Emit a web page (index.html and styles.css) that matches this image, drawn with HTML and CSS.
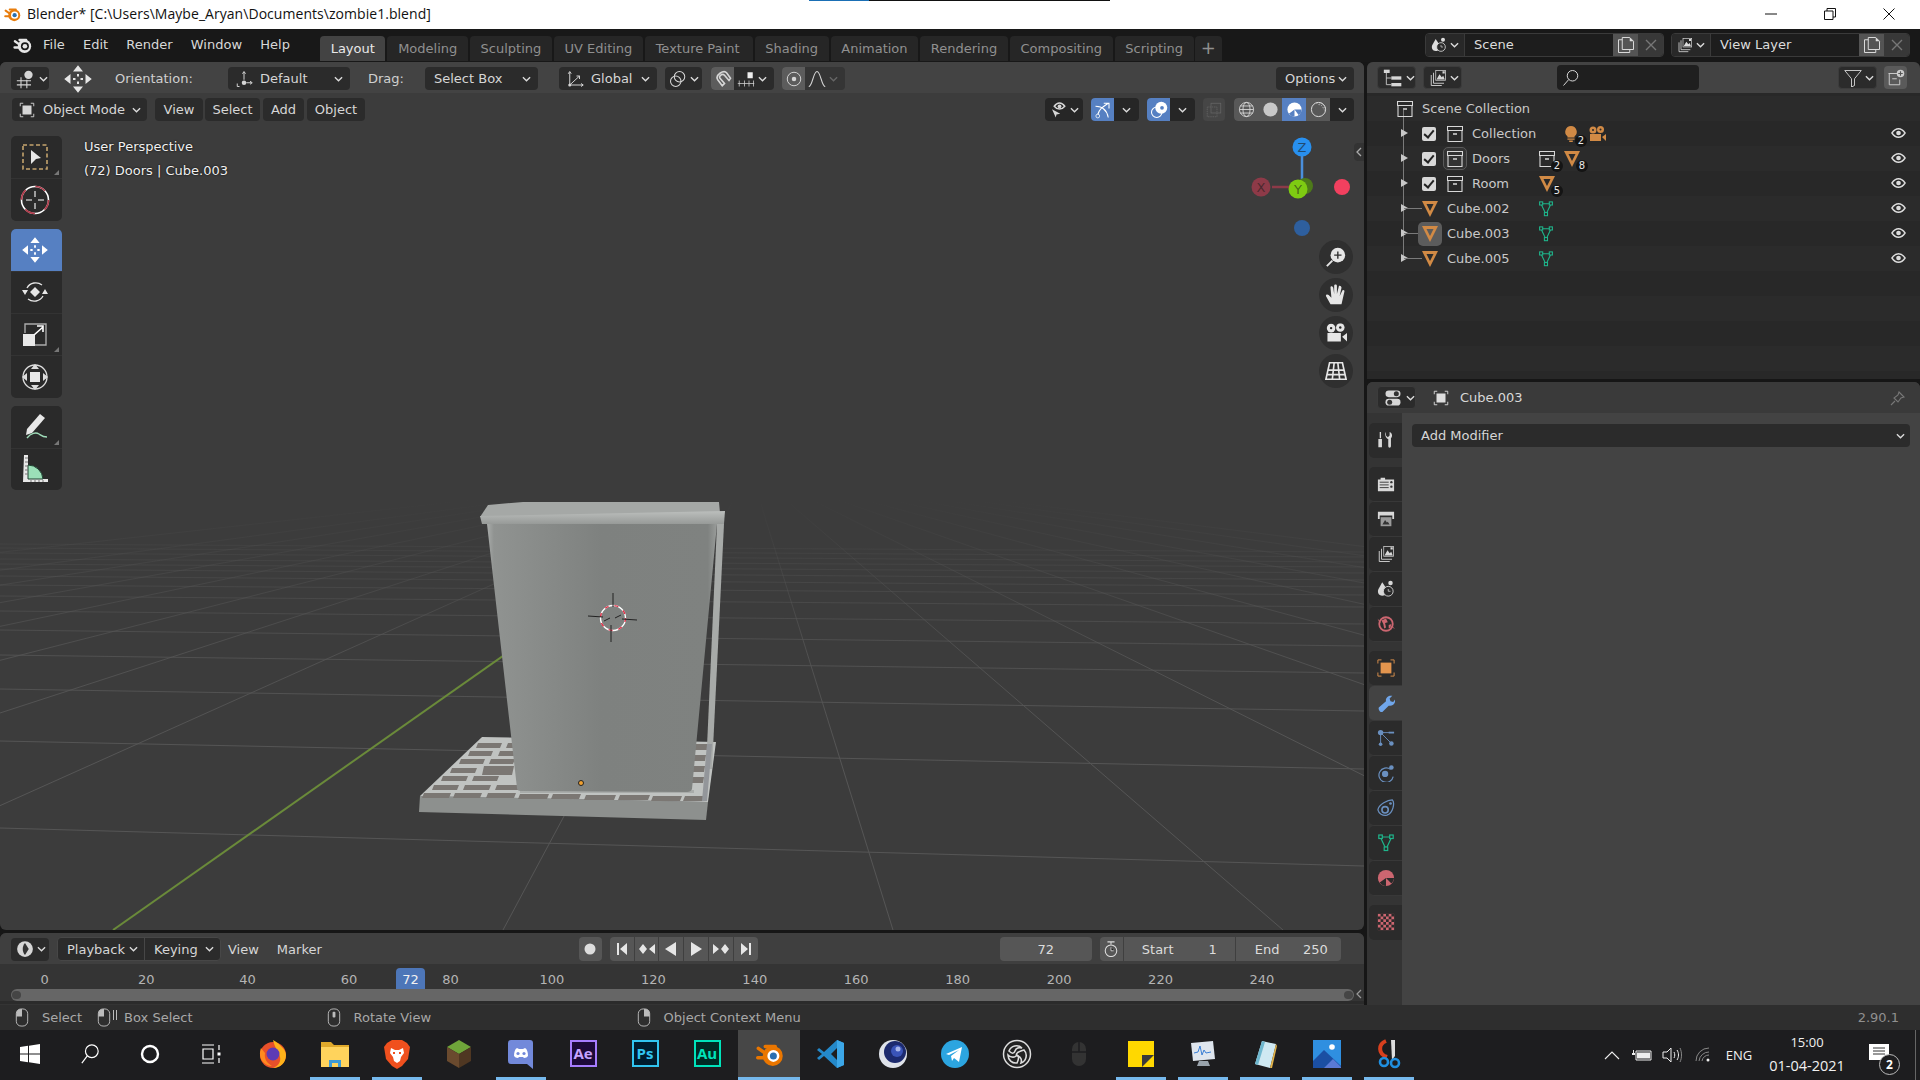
FILE: index.html
```html
<!DOCTYPE html>
<html lang="en">
<head>
<meta charset="utf-8">
<title>Blender</title>
<link rel="stylesheet" href="styles.css">
</head>
<body>
<svg class="sprite" aria-hidden="true"><defs>
<symbol id="chev" viewBox="0 0 10 6"><path d="M1 1l4 4 4-4" fill="none" stroke="currentColor" stroke-width="1.5"/></symbol>
<symbol id="blogo" viewBox="0 0 24 24"><path fill="none" stroke="currentColor" stroke-width="2.800" stroke-linecap="round" d="M3 15h9M3.500 7.500l9 6.500M9 6h8"/><circle cx="15" cy="13.500" r="8" fill="currentColor"/><circle cx="15.500" cy="13.500" r="4.800" fill="var(--eye,#181818)"/><circle cx="15.500" cy="13.500" r="2.800" fill="var(--pupil,#e6e6e6)"/></symbol>
<symbol id="v3d" viewBox="0 0 24 24"><path d="M1 14h17M1 19h17M6 10v13M13 13v10" fill="none" stroke="currentColor" stroke-width="1.300"/><circle cx="15" cy="7" r="5" fill="currentColor"/></symbol>
<symbol id="move" viewBox="0 0 24 24"><path fill="currentColor" d="M12 1l4 5H8zM12 23l-4-5h8zM1 12l5-4v8zM23 12l-5 4V8z"/><path stroke="currentColor" stroke-width="1.600" d="M12 8v2M12 14v2M8 12h2M14 12h2"/></symbol>
<symbol id="orient" viewBox="0 0 24 24"><path fill="none" stroke="currentColor" stroke-width="1.300" d="M12 3v10M10 5l2-3 2 3M15 17h7M20 15l3 2-3 2M3 18v4h3"/><circle cx="12" cy="17" r="3" fill="currentColor"/></symbol>
<symbol id="global" viewBox="0 0 24 24"><path fill="none" stroke="currentColor" stroke-width="1.300" d="M5 20V3M3 5l2-3 2 3M5 20h17M20 18l3 2-3 2M5 20L18 8M14 8h4v4"/><circle cx="5" cy="20" r="2" fill="currentColor"/></symbol>
<symbol id="pivot" viewBox="0 0 24 24"><circle cx="14" cy="9" r="7" fill="none" stroke="currentColor" stroke-width="1.400"/><circle cx="9" cy="15" r="7" fill="none" stroke="currentColor" stroke-width="1.400"/></symbol>
<symbol id="magnet" viewBox="0 0 24 24"><path fill="none" stroke="currentColor" stroke-width="2.200" d="M5 13l6 8 3-3-6-7c-2-3 3-7 6-4l6 7 2-3-5-7C13-1 1 7 5 13z"/></symbol>
<symbol id="incr" viewBox="0 0 24 24"><rect x="14" y="3" width="7" height="8" fill="#eee"/><path fill="none" stroke="currentColor" d="M1 18h22M3 14v8M10 14v8M16 14v8M22 14v8"/></symbol>
<symbol id="prop" viewBox="0 0 24 24"><circle cx="12" cy="12" r="9" fill="none" stroke="currentColor" stroke-width="1.300"/><circle cx="12" cy="12" r="3" fill="currentColor"/></symbol>
<symbol id="falloff" viewBox="0 0 24 24"><path fill="none" stroke="currentColor" stroke-width="1.400" d="M1 22c5 0 6-20 11-20s6 20 11 20"/></symbol>
<symbol id="objmode" viewBox="0 0 24 24"><rect x="6" y="6" width="12" height="12" fill="currentColor"/><path fill="none" stroke="currentColor" stroke-width="1.200" d="M3 7V3h4M17 3h4v4M21 17v4h-4M7 21H3v-4"/></symbol>
<symbol id="vis" viewBox="0 0 24 24"><path fill="currentColor" d="M4 11l5 11 1-4 5-1z"/><path fill="none" stroke="currentColor" stroke-width="2" d="M7 7c4-6 10-6 14 0-4 5-10 5-14 0z"/><circle cx="14" cy="7" r="2.500" fill="currentColor"/></symbol>
<symbol id="gizmoi" viewBox="0 0 24 24"><path fill="none" stroke="currentColor" stroke-width="1.400" d="M5 18C7 11 10 9 19 3M2 7c8 0 15 4 17 15M13 3h7v7"/><circle cx="5" cy="20" r="2.500" fill="none" stroke="currentColor"/></symbol>
<symbol id="over" viewBox="0 0 24 24"><circle cx="9" cy="15" r="7" fill="none" stroke="currentColor" stroke-width="1.400"/><circle cx="15" cy="9" r="8" fill="currentColor"/><circle cx="16" cy="9" r="2.500" fill="#5680c2"/></symbol>
<symbol id="xray" viewBox="0 0 24 24"><rect x="8" y="3" width="13" height="13" fill="none" stroke="currentColor"/><rect x="3" y="8" width="13" height="13" fill="none" stroke="currentColor" stroke-dasharray="2 1"/></symbol>
<symbol id="wire" viewBox="0 0 24 24"><g fill="none" stroke="currentColor" stroke-width="1.200"><circle cx="12" cy="12" r="10"/><ellipse cx="12" cy="12" rx="5" ry="10"/><path d="M2 12h20M3 7h18M3 17h18"/></g></symbol>
<symbol id="solid" viewBox="0 0 24 24"><circle cx="12" cy="12" r="10" fill="currentColor"/></symbol>
<symbol id="mat" viewBox="0 0 24 24"><circle cx="12" cy="12" r="10" fill="currentColor"/><path fill="#5680c2" d="M12 12h10a10 10 0 0 1-4 8zM12 12v10a10 10 0 0 1-8-4z"/></symbol>
<symbol id="rend" viewBox="0 0 24 24"><circle cx="12" cy="12" r="10" fill="none" stroke="currentColor" stroke-width="1.400"/><path fill="none" stroke="currentColor" stroke-dasharray="2 1.500" d="M12 5a7 7 0 0 1 7 7M9 3a9 9 0 0 1 12 11"/></symbol>
<symbol id="outl" viewBox="0 0 24 24"><rect x="1" y="2" width="7" height="4" fill="currentColor"/><path fill="none" stroke="currentColor" d="M4 6v14h6M4 12h6"/><rect x="10" y="10" width="12" height="4" fill="currentColor"/><rect x="10" y="18" width="12" height="4" fill="currentColor"/></symbol>
<symbol id="layers" viewBox="0 0 24 24"><path fill="none" stroke="currentColor" stroke-width="1.200" d="M3 8v14h14M6 5v14h14"/><rect x="9" y="2" width="13" height="13" fill="none" stroke="currentColor"/><path fill="currentColor" d="M10 14l4-7 3 4 2-2 2 5zM18 3h3v3h-3z"/></symbol>
<symbol id="search" viewBox="0 0 24 24"><circle cx="14" cy="9" r="7" fill="none" stroke="currentColor" stroke-width="1.300"/><path stroke="currentColor" stroke-width="1.300" d="M9 14l-7 8"/></symbol>
<symbol id="funnel" viewBox="0 0 24 24"><path fill="none" stroke="currentColor" stroke-width="1.200" d="M1 2h22l-9 11v9l-4 2V13z"/></symbol>
<symbol id="newcol" viewBox="0 0 24 24"><path fill="none" stroke="currentColor" stroke-width="1.300" d="M2 6h12M3 6v15h14v-7M7 13h6"/><circle cx="18" cy="6" r="5" fill="currentColor"/><path stroke="#555" stroke-width="1.500" d="M18 3v6M15 6h6"/></symbol>
<symbol id="scene" viewBox="0 0 24 24"><path fill="currentColor" d="M7 3l6 9c2 5-1 9-6 9s-7-5-5-9z"/><circle cx="18" cy="4" r="3" fill="currentColor"/><circle cx="15" cy="15" r="6.500" fill="#2a2a2a" stroke="currentColor" stroke-width="1.200"/><path stroke="currentColor" d="M15 15v-3M15 15h3"/></symbol>
<symbol id="copy" viewBox="0 0 24 24"><path fill="none" stroke="currentColor" stroke-width="1.300" d="M7 5H2v17h15v-4"/><path fill="none" stroke="currentColor" stroke-width="1.300" d="M7 2h10l5 5v11H7z"/><path fill="currentColor" d="M17 2l5 5h-5z"/></symbol>
<symbol id="cross" viewBox="0 0 12 12"><path stroke="currentColor" stroke-width="1.400" d="M1 1l10 10M11 1L1 11"/></symbol>
<symbol id="coll" viewBox="0 0 16 16"><path fill="none" stroke="currentColor" stroke-width="1.100" d="M.5.500h15v4H.5zM1 4.500v11h14v-11"/><path stroke="currentColor" stroke-width="1.400" d="M6 8h4"/></symbol>
<symbol id="meshobj" viewBox="0 0 16 16"><path fill-rule="evenodd" fill="currentColor" d="M0 0h16L8 16zM4.500 3l3.500 7 3.500-7z"/></symbol>
<symbol id="meshdata" viewBox="0 0 16 18"><g fill="none" stroke="currentColor" stroke-width="1.200"><rect x=".8" y="1" width="3.500" height="3.500"/><rect x="11.700" y="1" width="3.500" height="3.500"/><rect x="6.200" y="13" width="3.500" height="3.500"/><path d="M4 3h8M3 4.500l4 8.500M13 4.500l-4 8.500"/></g></symbol>
<symbol id="bulb" viewBox="0 0 16 18"><path fill="currentColor" d="M8 0a6.500 6.500 0 0 1 4 11.600V13H4v-1.400A6.500 6.500 0 0 1 8 0zM4 14h8v1.500H4zM6 16.400h4V18H6z"/></symbol>
<symbol id="cam" viewBox="0 0 18 16"><circle cx="5" cy="4" r="3.500" fill="currentColor"/><circle cx="12.500" cy="3.500" r="3.500" fill="currentColor"/><path fill="currentColor" d="M2 8h11v7H2zM14 11l4-3v7z"/><circle cx="5" cy="4" r="1" fill="#282828"/><circle cx="12.500" cy="3.500" r="1" fill="#282828"/></symbol>
<symbol id="eye" viewBox="0 0 16 12"><path fill="none" stroke="currentColor" stroke-width="1.500" d="M1 6c4-6 10-6 14 0-4 6-10 6-14 0z"/><circle cx="8" cy="6" r="2.500" fill="currentColor"/></symbol>
<symbol id="props" viewBox="0 0 24 24"><rect x="3" y="3" width="18" height="8" rx="4" fill="currentColor"/><rect x="3" y="13" width="18" height="8" rx="4" fill="currentColor"/><circle cx="16" cy="7" r="3" fill="#333"/><circle cx="8" cy="17" r="3" fill="#333"/></symbol>
<symbol id="pin" viewBox="0 0 16 16"><path fill="none" stroke="currentColor" stroke-width="1.100" d="M9 2l5 5-3 1-3 4-4-4 4-3zM5 11l-4 4"/></symbol>
<symbol id="t-tool" viewBox="0 0 20 20"><path fill="currentColor" d="M3 1h1.500v7H3zM1.500 9h4v9h-4zM10 1v4l2 2 2-2V1c3 1 3.500 5 1.500 7v9a1.500 1.500 0 0 1-3 0V9C10 8 8 4 10 1z"/></symbol>
<symbol id="t-render" viewBox="0 0 20 20"><path fill="currentColor" d="M1 5h18v13H1zM4 3h5v2H4z"/><path stroke="#333" d="M3 8h10M3 11h10M3 14h10"/><circle cx="16" cy="8" r="1.300" fill="#333"/><circle cx="16" cy="13" r="1.300" fill="#333"/></symbol>
<symbol id="t-output" viewBox="0 0 20 20"><path fill="currentColor" d="M1 2h18v8h-2V6H3v4H1z"/><rect x="4" y="8" width="12" height="10" fill="#9a9a9a"/><path fill="#333" d="M6 16l3-5 2 3 1-1 2 3z"/></symbol>
<symbol id="t-world" viewBox="0 0 20 20"><circle cx="10" cy="10" r="7.500" fill="#2a2a2a" stroke="currentColor" stroke-width="2"/><path fill="currentColor" d="M5 6l5-2 2 4-3 1 1 5-2 1-1-5zM13 11l3-1-1 4-2 1z"/><path stroke="currentColor" d="M1 5l3 3M19 15l-3-3"/></symbol>
<symbol id="t-object" viewBox="0 0 20 20"><rect x="4" y="4" width="12" height="12" fill="currentColor"/><path fill="none" stroke="currentColor" d="M1 5V1h4M15 1h4v4M19 15v4h-4M5 19H1v-4"/></symbol>
<symbol id="t-mod" viewBox="0 0 20 20"><path fill="currentColor" d="M2 15l8-7c-1-4 3-7 7-6l-3 3 1 3 3 1 2-3c1 5-3 8-7 7l-7 7c-2 1-5-2-4-5z"/></symbol>
<symbol id="t-part" viewBox="0 0 20 20"><g fill="currentColor"><circle cx="4" cy="4" r="3"/><circle cx="4" cy="17" r="2"/><circle cx="16" cy="16" r="2.500"/><rect x="13" y="3" width="6" height="2"/></g><path stroke="currentColor" d="M4 4v12M4 4l11 11M4 4h10"/></symbol>
<symbol id="t-phys" viewBox="0 0 20 20"><path fill="none" stroke="currentColor" stroke-width="1.300" d="M15 6a8 8 0 1 0 3 8"/><circle cx="9" cy="11" r="3.500" fill="currentColor"/><circle cx="16" cy="4" r="2.500" fill="currentColor"/></symbol>
<symbol id="t-con" viewBox="0 0 20 20"><path fill="none" stroke="currentColor" stroke-width="1.400" d="M1 12C2 6 12 1 17 1c3 3 1 15-6 17-5 1-9-2-10-6z"/><circle cx="9" cy="12" r="3.500" fill="none" stroke="currentColor" stroke-width="1.800"/><circle cx="15" cy="5" r="1.500" fill="currentColor"/></symbol>
<symbol id="t-mat" viewBox="0 0 20 20"><circle cx="10" cy="10" r="9" fill="currentColor"/><path fill="#2a2a2a" d="M10 10h9a9 9 0 0 1-3 6zM10 10v9a9 9 0 0 1-7-4z"/></symbol>
<symbol id="t-tex" viewBox="0 0 20 20"><rect x="1" y="1" width="18" height="18" fill="currentColor"/><path fill="#2a2a2a" d="M4 1h3v3H4zM10 1h3v3h-3zM16 1h3v3h-3zM1 4h3v3H1zM7 4h3v3H7zM13 4h3v3h-3zM4 7h3v3H4zM10 7h3v3h-3zM16 7h3v3h-3zM1 10h3v3H1zM7 10h3v3H7zM13 10h3v3h-3zM4 13h3v3H4zM10 13h3v3h-3zM16 13h3v3h-3zM1 16h3v3H1zM7 16h3v3H7zM13 16h3v3h-3z"/></symbol>
<symbol id="clockhead" viewBox="0 0 24 24"><circle cx="12" cy="12" r="10.500" fill="currentColor"/><path fill="#333" d="M12 4c-4 4-4 12 0 16l5-8z"/></symbol>
<symbol id="stop" viewBox="0 0 16 18"><path fill="none" stroke="currentColor" stroke-width="1.200" d="M4 1h8M8 1v3"/><circle cx="8" cy="11" r="6.500" fill="none" stroke="currentColor" stroke-width="1.200"/><path stroke="currentColor" d="M8 7v4h3"/></symbol>
<symbol id="ml" viewBox="0 0 14 20"><path fill="currentColor" d="M1 6a5 5 0 0 1 5-5h1v8H1z"/><rect x="1" y="1" width="12" height="18" rx="5" fill="none" stroke="currentColor"/></symbol>
<symbol id="mm" viewBox="0 0 14 20"><rect x="1" y="1" width="12" height="18" rx="5" fill="none" stroke="currentColor"/><rect x="5.500" y="4" width="3" height="6" rx="1" fill="currentColor"/></symbol>
<symbol id="mr" viewBox="0 0 14 20"><path fill="currentColor" d="M13 6a5 5 0 0 0-5-5H7v8h6z"/><rect x="1" y="1" width="12" height="18" rx="5" fill="none" stroke="currentColor"/></symbol>
<symbol id="plusmag" viewBox="0 0 24 24"><circle cx="14" cy="10" r="8" fill="currentColor"/><path stroke="#2f2f2f" stroke-width="1.500" d="M14 6v8M10 10h8"/><path stroke="currentColor" stroke-width="2" d="M8 16l-6 6"/></symbol>
<symbol id="hand" viewBox="0 0 24 24"><path fill="currentColor" d="M6 22l-5-9c0-2 2-2 3-1l3 3L6 4c0-2 2-2 3 0l1 7V2c0-2 3-2 3 0v9l2-8c0-2 3-1 3 1l-2 9 3-6c1-1 3 0 2 2l-3 13z"/></symbol>
<symbol id="persp" viewBox="0 0 24 24"><path fill="none" stroke="currentColor" stroke-width="1.800" d="M5 3h14l4 18H1zM3 11h18M2 16h20M10 3L8 21M14 3l2 18"/></symbol>
</defs></svg>

<header class="title">
  <svg class="title-logo" viewBox="0 0 24 24"><use href="#blogo"/></svg>
  <span class="title-text">Blender* [C:\Users\Maybe_Aryan\Documents\zombie1.blend]</span>
  <span class="progress"></span>
  <div class="win">
    <svg viewBox="0 0 12 12"><path d="M0 6h12" stroke="#111" fill="none"/></svg>
    <svg viewBox="0 0 12 12"><path d="M.5 3h8.500v8.500H.5zM3 3V.5h8.500V9H9" stroke="#111" fill="none"/></svg>
    <svg viewBox="0 0 12 12"><path d="M.5.500l11 11M11.500.500l-11 11" stroke="#111" fill="none"/></svg>
  </div>
</header>

<nav class="top">
  <div class="menu">
    <svg class="menu-logo"><use href="#blogo"/></svg>
    <span>File</span><span>Edit</span><span>Render</span><span>Window</span><span>Help</span>
  </div>
  <div class="tabs">
    <span class="tab active">Layout</span><span class="tab">Modeling</span><span class="tab">Sculpting</span><span class="tab">UV Editing</span><span class="tab">Texture Paint</span><span class="tab">Shading</span><span class="tab">Animation</span><span class="tab">Rendering</span><span class="tab">Compositing</span><span class="tab">Scripting</span><span class="tab plus">+</span>
  </div>
  <div class="selectors">
    <div class="sel">
      <span class="sel-ico"><svg class="i16"><use href="#scene"/></svg><svg class="chev"><use href="#chev"/></svg></span>
      <span class="sel-name">Scene</span>
      <span class="sel-btn"><svg class="i18"><use href="#copy"/></svg></span>
      <span class="sel-x"><svg class="i12"><use href="#cross"/></svg></span>
    </div>
    <div class="sel">
      <span class="sel-ico"><svg class="i16"><use href="#layers"/></svg><svg class="chev"><use href="#chev"/></svg></span>
      <span class="sel-name">View Layer</span>
      <span class="sel-btn"><svg class="i18"><use href="#copy"/></svg></span>
      <span class="sel-x"><svg class="i12"><use href="#cross"/></svg></span>
    </div>
  </div>
</nav>

<main class="main">
  <div class="col-left">
    <section class="viewport">
      <svg class="scene" viewBox="0 63 1364 868" aria-hidden="true">
        <defs>
          <linearGradient id="fade" gradientUnits="userSpaceOnUse" x1="0" y1="500" x2="0" y2="760">
            <stop offset="0" stop-color="#555" stop-opacity="0"/>
            <stop offset=".2" stop-color="#555" stop-opacity=".25"/>
            <stop offset=".6" stop-color="#555" stop-opacity=".8"/>
            <stop offset="1" stop-color="#555"/>
          </linearGradient>
          <linearGradient id="bucket" x1="0" x2="1" y1="0" y2="0">
            <stop offset="0" stop-color="#a9acaa"/><stop offset=".03" stop-color="#909391"/><stop offset=".5" stop-color="#7e817f"/><stop offset=".96" stop-color="#7f8280"/><stop offset="1" stop-color="#999c9a"/>
          </linearGradient>
          <linearGradient id="rim" x1="0" x2="0" y1="0" y2="1">
            <stop offset="0" stop-color="#bcbfbd"/><stop offset="1" stop-color="#979a98"/>
          </linearGradient>
        </defs>
        <g stroke="url(#fade)" stroke-width="1" fill="none">
          <path d="M750 470L-3400 931M750 470L-2667 931M750 470L-2227 931M750 470L-1837 931M750 470L-1447 931M750 470L-1057 931M750 470L-667 931M750 470L-277 931M750 470L503 931M750 470L893 931M750 470L1283 931M750 470L1673 931M750 470L2063 931M750 470L2453 931M750 470L2843 931M750 470L3233 931M750 470L3623 931M750 470L4013 931M750 470L4400 931"/>
          <path d="M0 829L1364 867M0 742L1364 770M0 690L1364 712M0 656L1364 674M0 631L1364 647M0 612L1364 625M0 597L1364 608M0 586L1364 596M0 577L1364 588M0 570L1364 581M0 565L1364 574M0 560L1364 568M0 554L1364 563M0 549L1364 558M0 545L1364 553"/>
        </g>
        <path d="M113 931L520 645" stroke="#6a8a3a" stroke-width="2" fill="none"/>

        <!-- plate -->
        <path fill="#8d908e" d="M420 797L708 803 706 821 419 813z"/>
        <path fill="#c0c3c1" d="M420 797L482 738 716 743 708 803z"/>
        <path fill="#7b7773" d="M424 794h27l-2 5h-27zM455 794h27l-2 5h-27zM488 794h28l-2 5h-28zM520 795h29l-2 5h-29zM553 795h28l-2 5h-28zM586 796h30l-2 5h-30zM620 796h30l-2 5h-30zM653 797h29l-2 5h-29zM685 797h20l-2 5h-20zM434 786h25l-2 5h-25zM465 786h26l-2 5h-26zM497 786h24l-2 5h-24zM443 777h25l-2 5h-25zM474 777h25l-2 5h-25zM452 769h25l-2 5h-25zM484 767h30l-2 9h-30zM461 760h24l-2 5h-24zM491 760h24l-2 5h-24zM470 752h23l-2 5h-23zM500 752h20l-2 5h-20zM478 744h24l-2 5h-24zM508 744h14l-2 5h-14zM694 745h14l-1 6h-14zM693 756h13l-1 6h-13zM692 767h13l-1 6h-13zM691 778h13l-1 6h-13z"/>
        <path fill="#a9acaa" d="M520 791h174v3H520z"/>

        <!-- bucket -->
        <path fill="#a5a8a6" d="M488 506L523 503 719 503 720 514 480 518z"/>
        <path fill="url(#bucket)" d="M487 525L717 525 692 790q-1 3-5 3L521 792q-4 0-4-3z"/>
        <path fill="#a7aaa8" d="M717 525L724 525 712 770 706 770z"/>
        <path fill="#93969a" d="M707 745h5l-5 57h-5z"/>
        <path fill="url(#rim)" d="M480 517L725 512 724 525 482 525z"/>

        <!-- 3d cursor -->
        <circle cx="613" cy="619" r="12.500" fill="none" stroke="#fff" stroke-width="1.400"/>
        <circle cx="613" cy="619" r="12.500" fill="none" stroke="#e03048" stroke-width="1.400" stroke-dasharray="4 6"/>
        <path stroke="#222" stroke-width="1" d="M613 594v14M611 626v17M588 617l15 1M622 620l15 1M604 622l6-3M615 619l6-3"/>
        <circle cx="581" cy="784" r="2.500" fill="#f0a030" stroke="#222"/>
      </svg>

      <div class="vh1">
        <span class="btn w-edit"><svg class="i20"><use href="#v3d"/></svg><svg class="chev"><use href="#chev"/></svg></span>
        <span class="bare w-move"><svg class="i30"><use href="#move"/></svg></span>
        <span class="label w-orient">Orientation:</span>
        <span class="btn w-default"><svg class="i18"><use href="#orient"/></svg><span class="grow">Default</span><svg class="chev"><use href="#chev"/></svg></span>
        <span class="label w-drag">Drag:</span>
        <span class="btn w-box"><span class="grow">Select Box</span><svg class="chev"><use href="#chev"/></svg></span>
        <span class="btn w-global"><svg class="i18"><use href="#global"/></svg><span class="grow">Global</span><svg class="chev"><use href="#chev"/></svg></span>
        <span class="btn w-pivot"><svg class="i18"><use href="#pivot"/></svg><svg class="chev"><use href="#chev"/></svg></span>
        <span class="btn w-snap"><span class="seg grey"><svg class="i18"><use href="#magnet"/></svg></span><svg class="i18"><use href="#incr"/></svg><svg class="chev"><use href="#chev"/></svg></span>
        <span class="btn w-snap w-prop"><span class="seg grey"><svg class="i18"><use href="#prop"/></svg></span><svg class="i18"><use href="#falloff"/></svg><svg class="chev dim"><use href="#chev"/></svg></span>
        <span class="btn w-options"><span class="grow">Options</span><svg class="chev"><use href="#chev"/></svg></span>
      </div>

      <div class="vh2">
        <span class="btn w-mode"><svg class="i18"><use href="#objmode"/></svg><span class="grow">Object Mode</span><svg class="chev"><use href="#chev"/></svg></span>
        <span class="btn w-view">View</span>
        <span class="btn w-select">Select</span>
        <span class="btn w-add">Add</span>
        <span class="btn w-object">Object</span>
        <span class="btn w-vis"><svg class="i18"><use href="#vis"/></svg><svg class="chev"><use href="#chev"/></svg></span>
        <span class="btn w-on"><span class="seg blue"><svg class="i18"><use href="#gizmoi"/></svg></span><span class="rest"><svg class="chev"><use href="#chev"/></svg></span></span>
        <span class="btn w-on"><span class="seg blue"><svg class="i18"><use href="#over"/></svg></span><span class="rest"><svg class="chev"><use href="#chev"/></svg></span></span>
        <span class="btn w-xray"><svg class="i18"><use href="#xray"/></svg></span>
        <span class="btn w-shade">
          <span class="cell"><svg class="i18"><use href="#wire"/></svg></span>
          <span class="cell"><svg class="i18"><use href="#solid"/></svg></span>
          <span class="cell blue"><svg class="i18"><use href="#mat"/></svg></span>
          <span class="cell"><svg class="i18"><use href="#rend"/></svg></span>
          <span class="rest"><svg class="chev"><use href="#chev"/></svg></span>
        </span>
      </div>

      <div class="tools">
        <div class="tool-group">
          <span class="tool corner"><svg class="i28" viewBox="0 0 28 28"><rect x="2" y="2" width="24" height="24" fill="none" stroke="#c5a46d" stroke-width="1.600" stroke-dasharray="4 2.500"/><path fill="#e8e8e8" d="M10 7l10 8-5 1-5 5z"/></svg></span>
          <span class="tool"><svg class="i30" viewBox="0 0 30 30"><circle cx="15" cy="15" r="13.500" fill="none" stroke="#fff" stroke-width="1.600"/><circle cx="15" cy="15" r="13.500" fill="none" stroke="#b03a4a" stroke-width="1.700" stroke-dasharray="10.600 10.600"/><path stroke="#bbb" stroke-width="1.600" d="M15 6v6M15 18v6M6 15h6M18 15h6"/></svg></span>
        </div>
        <div class="tool-group">
          <span class="tool on"><svg class="i28"><use href="#move"/></svg></span>
          <span class="tool"><svg class="i28" viewBox="0 0 28 28"><path fill="none" stroke="#e6e6e6" stroke-width="1.300" d="M6 10a10 10 0 0 1 15-3M22 18a10 10 0 0 1-15 3"/><path fill="#e6e6e6" d="M14 9l5 5-5 5-5-5zM1 12h6l-3 5zM21 16h6l-3-5z"/></svg></span>
          <span class="tool corner"><svg class="i28" viewBox="0 0 28 28"><path fill="none" stroke="#aaa" stroke-width="1.400" d="M4 12V3h21v21H14"/><rect x="2" y="13" width="12" height="12" fill="#e8e8e8"/><path fill="none" stroke="#fff" stroke-width="1.600" d="M13 14L22 6M16 5h6v6"/></svg></span>
          <span class="tool"><svg class="i28" viewBox="0 0 28 28"><circle cx="14" cy="14" r="12" fill="none" stroke="#ddd" stroke-width="1.300"/><rect x="9" y="9" width="10" height="10" fill="#e8e8e8"/><path fill="#ddd" d="M14 1l4 5h-8zM14 27l-4-5h8zM1 14l5-4v8zM27 14l-5 4v-8z"/></svg></span>
        </div>
        <div class="tool-group">
          <span class="tool corner"><svg class="i30" viewBox="0 0 30 30"><path fill="#e8e8e8" d="M20 2l5 4-13 15-6 2 1-6z"/><path fill="none" stroke="#9fdcb9" stroke-width="1.400" d="M7 26c4-5 9-6 12-4s4 3 8 3"/></svg></span>
          <span class="tool"><svg class="i30" viewBox="0 0 30 30"><path fill="#e8e8e8" d="M4 1h4v24h20v3H3z"/><path fill="#9be0b8" stroke="#1f4030" d="M8 11a15 15 0 0 1 15 14H8z"/><path stroke="#777" d="M5 4h3M5 8h3M5 12h3M5 16h3M5 20h3M11 26v2M15 26v2M19 26v2M23 26v2"/></svg></span>
        </div>
      </div>

      <div class="overlay-text">
        <span>User Perspective</span>
        <span>(72) Doors | Cube.003</span>
      </div>

      <span class="side-tab"><svg viewBox="0 0 6 10"><path d="M5 1L1 5l4 4" fill="none" stroke="#aaa" stroke-width="1.300"/></svg></span>

      <svg class="gizmo" viewBox="0 0 100 130">
        <path stroke="#4a8fdc" stroke-width="2.500" d="M30 15v42"/>
        <path stroke="#8d3a48" stroke-width="2.500" d="M0 55h30"/>
        <circle cx="33" cy="54" r="8" fill="#4d7a1a"/>
        <circle cx="30" cy="15" r="9.500" fill="#2890f0"/><text class="gz" x="30" y="19.500">Z</text>
        <circle cx="26" cy="57" r="9.500" fill="#7ecb12"/><text class="gz" x="26" y="61.500">Y</text>
        <circle cx="70" cy="55" r="8" fill="#f2405f"/>
        <circle cx="30" cy="96" r="8" fill="#2e5f9e"/>
      </svg>
      <svg class="gizmo-x" viewBox="0 0 20 20"><circle cx="10" cy="10" r="9.500" fill="#8d3a48"/><text class="gz" x="10" y="14.500">X</text></svg>

      <div class="nav-btns">
        <span class="nav"><svg class="i22"><use href="#plusmag"/></svg></span>
        <span class="nav"><svg class="i22"><use href="#hand"/></svg></span>
        <span class="nav"><svg class="i22" viewBox="0 0 18 16"><use href="#cam"/></svg></span>
        <span class="nav"><svg class="i22"><use href="#persp"/></svg></span>
      </div>
    </section>

    <section class="timeline">
      <div class="tl-head">
        <span class="btn w-edit"><svg class="i18"><use href="#clockhead"/></svg><svg class="chev"><use href="#chev"/></svg></span>
        <span class="btn-join">
          <span class="j w-play"><span class="grow">Playback</span><svg class="chev"><use href="#chev"/></svg></span>
          <span class="j w-key"><span class="grow">Keying</span><svg class="chev"><use href="#chev"/></svg></span>
        </span>
        <span class="tl-link first">View</span>
        <span class="tl-link">Marker</span>
        <span class="g-btn w-rec"><svg class="i12" viewBox="0 0 12 12"><circle cx="6" cy="6" r="5.500" fill="#ddd"/></svg></span>
        <span class="g-btn transport">
          <span class="t"><svg class="i14" viewBox="0 0 14 14"><path fill="#e6e6e6" d="M2 1h2v12H2zM12 1v12L5 7z"/></svg></span>
          <span class="t"><svg class="i16" viewBox="0 0 16 14"><path fill="#e6e6e6" d="M4 2l4 5-4 5-4-5zM16 2v10l-6-5z"/></svg></span>
          <span class="t"><svg class="i14" viewBox="0 0 14 14"><path fill="#e6e6e6" d="M12 0v14L1 7z"/></svg></span>
          <span class="t"><svg class="i14" viewBox="0 0 14 14"><path fill="#e6e6e6" d="M2 0v14l11-7z"/></svg></span>
          <span class="t"><svg class="i16" viewBox="0 0 16 14"><path fill="#e6e6e6" d="M0 2v10l6-5zM12 2l4 5-4 5-4-5z"/></svg></span>
          <span class="t"><svg class="i14" viewBox="0 0 14 14"><path fill="#e6e6e6" d="M2 1v12l7-6zM10 1h2v12h-2z"/></svg></span>
        </span>
        <span class="g-btn w-frame">72</span>
        <span class="g-btn range">
          <span class="r-clock"><svg class="i16" viewBox="0 0 16 18"><use href="#stop"/></svg></span>
          <span class="r-val w-start"><span>Start</span><span>1</span></span>
          <span class="r-val w-end"><span>End</span><span>250</span></span>
        </span>
      </div>
      <div class="ruler">
        <span class="rl">0</span><span class="rl">20</span><span class="rl">40</span><span class="rl">60</span><span class="rl">80</span><span class="rl">100</span><span class="rl">120</span><span class="rl">140</span><span class="rl">160</span><span class="rl">180</span><span class="rl">200</span><span class="rl">220</span><span class="rl">240</span>
        <span class="badge">72</span>
      </div>
      <div class="scrollrow">
        <span class="scroll"><i></i><i></i></span>
        <svg class="tl-arrow" viewBox="0 0 6 10"><path d="M5 1L1 5l4 4" fill="none" stroke="#999" stroke-width="1.200"/></svg>
      </div>
    </section>
  </div>

  <div class="col-right">
    <section class="outliner">
      <div class="ol-head">
        <span class="btn w-ol1"><svg class="i20"><use href="#outl"/></svg><svg class="chev"><use href="#chev"/></svg></span>
        <span class="btn w-ol2"><svg class="i18"><use href="#layers"/></svg><svg class="chev"><use href="#chev"/></svg></span>
        <span class="ol-search"><svg class="i18"><use href="#search"/></svg></span>
        <span class="btn w-ol1 ol-filter"><svg class="i18"><use href="#funnel"/></svg><svg class="chev"><use href="#chev"/></svg></span>
        <span class="ol-new"><svg class="i18"><use href="#newcol"/></svg></span>
      </div>
      <div class="ol-list">
        <span class="tree"></span>
        <div class="row root"><svg class="ico"><use href="#coll"/></svg><span class="name">Scene Collection</span></div>
        <div class="row">
          <span class="arrow"></span><span class="check"></span><svg class="ico coll-ico"><use href="#coll"/></svg><span class="name cname">Collection</span>
          <span class="extra push"><svg class="ico orange"><use href="#bulb"/></svg><b>2</b></span>
          <svg class="ico orange cam"><use href="#cam"/></svg>
          <svg class="eye"><use href="#eye"/></svg>
        </div>
        <div class="row">
          <span class="arrow"></span><span class="check"></span><span class="coll-box"><svg class="ico"><use href="#coll"/></svg></span><span class="name cname">Doors</span>
          <span class="extra"><svg class="ico"><use href="#coll"/></svg><b>2</b></span>
          <span class="extra next"><svg class="ico orange"><use href="#meshobj"/></svg><b>8</b></span>
          <svg class="eye"><use href="#eye"/></svg>
        </div>
        <div class="row">
          <span class="arrow"></span><span class="check"></span><svg class="ico coll-ico"><use href="#coll"/></svg><span class="name cname">Room</span>
          <span class="extra"><svg class="ico orange"><use href="#meshobj"/></svg><b>5</b></span>
          <svg class="eye"><use href="#eye"/></svg>
        </div>
        <div class="row obj"><span class="arrow"></span><svg class="ico orange mo"><use href="#meshobj"/></svg><span class="name oname">Cube.002</span><svg class="ico green"><use href="#meshdata"/></svg><svg class="eye"><use href="#eye"/></svg></div>
        <div class="row obj"><span class="arrow"></span><span class="mo-box"><svg class="ico orange"><use href="#meshobj"/></svg></span><span class="name oname">Cube.003</span><svg class="ico green"><use href="#meshdata"/></svg><svg class="eye"><use href="#eye"/></svg></div>
        <div class="row obj"><span class="arrow"></span><svg class="ico orange mo"><use href="#meshobj"/></svg><span class="name oname">Cube.005</span><svg class="ico green"><use href="#meshdata"/></svg><svg class="eye"><use href="#eye"/></svg></div>
      </div>
    </section>

    <section class="properties">
      <div class="pr-head">
        <span class="btn w-pr"><svg class="i20"><use href="#props"/></svg><svg class="chev"><use href="#chev"/></svg></span>
        <svg class="i18 pr-obj"><use href="#objmode"/></svg>
        <span class="pr-name">Cube.003</span>
        <svg class="pin"><use href="#pin"/></svg>
      </div>
      <div class="pr-body">
        <div class="pr-tabs">
          <span class="ptab solo"><svg class="i18 c-w"><use href="#t-tool"/></svg></span>
          <div class="pgroup">
            <span class="ptab"><svg class="i18 c-w"><use href="#t-render"/></svg></span>
            <span class="ptab"><svg class="i18 c-w"><use href="#t-output"/></svg></span>
            <span class="ptab"><svg class="i18 c-w"><use href="#layers"/></svg></span>
            <span class="ptab"><svg class="i18 c-w"><use href="#scene"/></svg></span>
            <span class="ptab"><svg class="i18 c-r"><use href="#t-world"/></svg></span>
          </div>
          <div class="pgroup">
            <span class="ptab"><svg class="i18 c-o"><use href="#t-object"/></svg></span>
            <span class="ptab act"><svg class="i18 c-b"><use href="#t-mod"/></svg></span>
            <span class="ptab"><svg class="i18 c-bd"><use href="#t-part"/></svg></span>
            <span class="ptab"><svg class="i18 c-bd"><use href="#t-phys"/></svg></span>
            <span class="ptab"><svg class="i18 c-bd"><use href="#t-con"/></svg></span>
            <span class="ptab"><svg class="i18 c-g" viewBox="0 0 16 18"><use href="#meshdata"/></svg></span>
            <span class="ptab"><svg class="i18 c-r"><use href="#t-mat"/></svg></span>
          </div>
          <span class="ptab solo last"><svg class="i18 c-r"><use href="#t-tex"/></svg></span>
        </div>
        <div class="pr-main">
          <span class="btn add-mod"><span class="grow">Add Modifier</span><svg class="chev"><use href="#chev"/></svg></span>
        </div>
      </div>
    </section>
  </div>
</main>

<footer class="status">
  <span class="st s1"><svg class="ms"><use href="#ml"/></svg>Select</span>
  <span class="st s2"><svg class="ms"><use href="#ml"/></svg><span class="ripple"></span>Box Select</span>
  <span class="st s3"><svg class="ms"><use href="#mm"/></svg>Rotate View</span>
  <span class="st s4"><svg class="ms"><use href="#mr"/></svg>Object Context Menu</span>
  <span class="version">2.90.1</span>
</footer>

<div class="taskbar">
  <span class="tb sys"><svg class="i20" viewBox="0 0 20 20"><path fill="#fff" d="M0 3l8-1.200V9.500H0zM9 1.700L20 0v9.500H9zM0 10.500h8v7.700L0 17zM9 10.500h11V20L9 18.300z"/></svg></span>
  <span class="tb sys"><svg class="i20" viewBox="0 0 20 22"><circle cx="12" cy="8" r="7" fill="none" stroke="#fff" stroke-width="1.300"/><path stroke="#fff" stroke-width="1.300" d="M7 13l-6 8"/></svg></span>
  <span class="tb sys"><svg class="i20" viewBox="0 0 20 20"><circle cx="10" cy="10" r="8" fill="none" stroke="#fff" stroke-width="2.400"/></svg></span>
  <span class="tb sys wide"><svg class="i20" viewBox="0 0 20 20"><path fill="none" stroke="#fff" stroke-width="1.200" d="M1 1h12M1 19h12M2 5h10v10H2zM18 1v5M18 14v5"/><path fill="#fff" d="M16.500 8.500h3v3h-3z"/></svg></span>

  <span class="tb"><svg class="i30" viewBox="0 0 30 30"><circle cx="15" cy="16" r="13" fill="#e8502a"/><path fill="#ffb21a" d="M15 1c7 4 13 10 13 15 0 8-6 13-13 13 6-2 8-7 7-11-1-5-5-8-7-17z"/><path fill="#ff8a1f" d="M3 9c-2 5-1 11 2 14 2 2 5 4 9 4-5-3-8-7-7-13z"/><circle cx="15" cy="15" r="6.500" fill="#5d3bb5"/></svg></span>
  <span class="tb on"><svg class="i30" viewBox="0 0 30 30"><path fill="#e0a92b" d="M1 3h10l3 3h15v22H1z"/><path fill="#ffd35c" d="M1 8h28v20H1z"/><path fill="#3d9ad6" d="M9 21h12v7h-3v-4h-6v4H9z"/></svg></span>
  <span class="tb on"><svg class="i30" viewBox="0 0 30 30"><path fill="#f0501e" d="M5 4l5-3h10l5 3 3 4-2 12-6 7-5 3-5-3-6-7L2 8z"/><path fill="#fff" d="M9 9l4 2h4l4-2 1 5-3 4-1 4-3 2-3-2-1-4-3-4z"/><path fill="#f0501e" d="M11 13h2v2h-2zM17 13h2v2h-2z"/></svg></span>
  <span class="tb"><svg class="i30" viewBox="0 0 30 30"><path fill="#6fa53a" d="M15 1l12 7-12 7-12-7z"/><path fill="#6a4a2e" d="M3 8l12 7v14L3 22z"/><path fill="#4f3722" d="M27 8L15 15v14l12-7z"/></svg></span>
  <span class="tb on"><svg class="i30" viewBox="0 0 30 30"><path fill="#7289da" d="M5 1h19a3 3 0 0 1 3 3v26l-6-5H5a3 3 0 0 1-3-3V4a3 3 0 0 1 3-3z"/><path fill="#fff" d="M8 17c0-4 1-7 3-8l2 1h4l2-1c2 1 3 4 3 8-1 1-2 2-4 2l-1-1h-4l-1 1c-2 0-3-1-4-2z"/><circle cx="12" cy="14.500" r="1.600" fill="#7289da"/><circle cx="18" cy="14.500" r="1.600" fill="#7289da"/></svg></span>
  <span class="tb"><span class="adobe ae">Ae</span></span>
  <span class="tb"><span class="adobe ps">Ps</span></span>
  <span class="tb"><span class="adobe au">Au</span></span>
  <span class="tb active"><svg class="i30 blender" viewBox="0 0 24 24"><use href="#blogo"/></svg></span>
  <span class="tb"><svg class="i30" viewBox="0 0 30 30"><path fill="#2489ca" d="M21 1l7 3v22l-7 3L8 17l-5 4-2-2 5-4-5-4 2-2 5 4z"/><path fill="#3ca7e8" d="M21 1l7 3v22l-7 3z"/><path fill="#1e1e20" d="M21 9l-6 6 6 6z"/></svg></span>
  <span class="tb"><svg class="i30" viewBox="0 0 30 30"><circle cx="15" cy="15" r="14" fill="#dfe3ea"/><circle cx="17" cy="13" r="11" fill="#1c2a6e"/><circle cx="19" cy="12" r="6" fill="#3a54b8"/><circle cx="20" cy="10" r="2.500" fill="#a8b6ea"/></svg></span>
  <span class="tb"><svg class="i30" viewBox="0 0 30 30"><circle cx="15" cy="15" r="14" fill="#2ca5e0"/><path fill="#fff" d="M6 15l16-7-3 15-5-4-2 3-1-5 8-6-10 5z"/></svg></span>
  <span class="tb"><svg class="i30" viewBox="0 0 30 30"><circle cx="15" cy="15" r="13.500" fill="#222" stroke="#ddd" stroke-width="1.500"/><g fill="none" stroke="#ddd" stroke-width="1.600"><path d="M7 12a8 8 0 0 1 13-3c-3-1-6 0-7 3s-3 3-6 0z"/><path d="M22 11a8 8 0 0 1-3 13c1-3 0-6-3-7s-2-4 6-6z"/><path d="M15 24a8 8 0 0 1-9-8c2 2 6 3 8 1s4 1 1 7z"/></g></svg></span>
  <span class="tb"><svg class="i30" viewBox="0 0 30 30"><rect x="8" y="3" width="14" height="24" rx="7" fill="#333"/><path stroke="#1e1e20" stroke-width="1.500" d="M8 13h14M15 3v10"/></svg></span>
  <span class="tb on"><svg class="i30" viewBox="0 0 30 30"><path fill="#ffd800" d="M2 2h26v26H2z"/><path fill="#3a3a3a" d="M16 28l12-12H16z"/></svg></span>
  <span class="tb on"><svg class="i30" viewBox="0 0 30 30"><path fill="#dfe6ee" d="M3 4l22-2 2 18-22 2z"/><path fill="none" stroke="#3a7fd5" d="M6 14l4-1 2-6 2 9 2-5 2 3 5-1"/><path fill="#9aa4ad" d="M11 22h9l2 5H9z"/></svg></span>
  <span class="tb on"><svg class="i30" viewBox="0 0 30 30"><path fill="#cfe9f2" d="M12 2l14 3-6 24-15-4z"/><path fill="#6fb8cf" d="M5 25L12 2l3 1-7 23z"/><path fill="#e3b44a" d="M20 29l6-24 1 2-5 22z"/></svg></span>
  <span class="tb on"><svg class="i30" viewBox="0 0 30 30"><rect x="1" y="1" width="28" height="28" fill="#2f8fe0"/><path fill="#1b4fa3" d="M1 29V22l11-11 17 16v2z"/><path fill="#5a7ad5" d="M12 29l9-9 8 8v1z"/><circle cx="20" cy="8" r="2.800" fill="#fff"/></svg></span>
  <span class="tb on"><svg class="i30" viewBox="0 0 30 30"><path fill="none" stroke="#d8401e" stroke-width="4" d="M12 2c-8 3-8 13 1 16"/><path fill="#ddd" d="M17 1h4v16l-3 4z"/><circle cx="10" cy="23" r="4" fill="none" stroke="#1f8fe0" stroke-width="2.600"/><circle cx="21" cy="24" r="4" fill="none" stroke="#1f8fe0" stroke-width="2.600"/></svg></span>

  <div class="tray">
    <span class="tr w30"><svg class="i16" viewBox="0 0 16 10"><path fill="none" stroke="#eee" stroke-width="1.100" d="M1 9l7-7 7 7"/></svg></span>
    <span class="tr w30"><svg class="i20" viewBox="0 0 20 12"><path fill="none" stroke="#eee" d="M4 2h15v9H4z"/><path fill="#eee" d="M5 3.500h13v6H5zM0 4h3v2H0zM1 1h1v3H1z"/></svg></span>
    <span class="tr w30"><svg class="i20" viewBox="0 0 20 16"><path fill="none" stroke="#eee" d="M1 5h4l4-4v14l-4-4H1zM12 5c1 2 1 4 0 6M15 3c2 3 2 7 0 10"/><path fill="none" stroke="#888" d="M18 1c2 4 2 10 0 14"/></svg></span>
    <span class="tr w31"><svg class="i16" viewBox="0 0 16 16"><g fill="none" stroke="#888" stroke-width="1"><path d="M1 14A13 13 0 0 1 14 1M4 14A10 10 0 0 1 14 5M7 14a7 7 0 0 1 7-6"/></g><circle cx="13" cy="13" r="1.500" fill="#eee"/></svg></span>
    <span class="tr eng">ENG</span>
    <span class="tr clock"><span>15:00</span><span class="date">01-04-2021</span></span>
    <span class="tr notif"><svg class="i20" viewBox="0 0 20 18"><path fill="#fff" d="M0 0h20v16H0z"/><path stroke="#333" d="M4 4h12M4 7h12M4 10h12"/></svg><span class="nbadge">2</span></span>
    <span class="desktop"></span>
  </div>
</div>
</body>
</html>
```
FILE: styles.css
```css
* { box-sizing: border-box; }
html, body { margin: 0; padding: 0; }
body {
  width: 1920px; height: 1080px; overflow: hidden;
  display: flex; flex-direction: column;
  font: 13px/1 "DejaVu Sans", sans-serif;
  color: #dcdcdc; background: #161616;
}
svg { display: block; flex: none; }
.sprite { position: absolute; width: 0; height: 0; }
.i12 { width: 12px; height: 12px; }
.i14 { width: 14px; height: 14px; }
.i16 { width: 16px; height: 16px; }
.i18 { width: 18px; height: 18px; }
.i20 { width: 20px; height: 20px; }
.i22 { width: 22px; height: 22px; }
.i28 { width: 28px; height: 28px; }
.i30 { width: 30px; height: 30px; }
.chev { width: 9px; height: 6px; color: #dcdcdc; margin-left: 3px; }
.chev.dim { color: #666; }
.grow { flex: 1; }

/* title bar */
.title {
  height: 29px; background: #fff; color: #111; position: relative;
  display: flex; align-items: center; padding-left: 3px;
  font: 14px/1 "Open Sans", sans-serif; letter-spacing: .045px;
}
.title-logo { width: 18px; height: 18px; color: #e87d0d; --eye: #fff; --pupil: #2a6fb0; }
.title-text { margin-left: 6px; }
.progress {
  position: absolute; top: 0; left: 809px; width: 301px; height: 1px;
  background: linear-gradient(90deg, #1a6fb5 0 20%, #111 20%);
}
.win { margin-left: auto; display: flex; align-items: center; }
.win svg { width: 12px; height: 12px; }
.win svg:nth-child(1) { margin-right: 47px; }
.win svg:nth-child(2) { margin-right: 47px; }
.win svg:nth-child(3) { margin-right: 25px; }

/* top bar */
.top { height: 34px; background: #181818; display: flex; align-items: flex-start; }
.menu { width: 320px; height: 31px; display: flex; align-items: center; color: #d8d8d8; padding-top: 1px; }
.menu-logo { width: 20px; height: 20px; margin: 0 11px 0 12px; color: #e6e6e6; --eye: #181818; }
.menu span { margin-right: 18.2px; }
.tabs { display: flex; gap: 2px; margin-top: 7px; }
.tab {
  height: 25px; padding: 0 10.65px; background: #262626; color: #909090;
  border-radius: 4px 4px 0 0; display: flex; align-items: center;
}
.tab:nth-child(5) { padding-right: 13px; }
.tab.active { background: #434343; color: #e8e8e8; }
.tab.plus { padding: 0 6px; font-size: 18px; margin-left: -1px; }
.selectors { margin-left: auto; display: flex; gap: 7px; padding: 4px 10px 0 0; }
.sel {
  width: 239px; height: 24px; display: flex; background: #1d1d1d;
  border-radius: 4px; border: 1px solid #3a3a3a; overflow: hidden;
}
.sel-ico { width: 39px; display: flex; align-items: center; justify-content: center; background: #282828; border-right: 1px solid #3a3a3a; color: #ddd; }
.sel-name { flex: 1; display: flex; align-items: center; padding-left: 9px; color: #dcdcdc; }
.sel-btn { width: 25px; background: #545454; display: flex; align-items: center; justify-content: center; color: #ddd; }
.sel-x { width: 25px; background: #383838; display: flex; align-items: center; justify-content: center; color: #777; }

/* main */
.main { height: 943px; flex: none; display: flex; background: #161616; }
.col-left { width: 1364px; display: flex; flex-direction: column; gap: 3px; }
.col-right { width: 553px; margin-left: 3px; flex: 1; display: flex; flex-direction: column; gap: 3px; }

/* viewport */
.viewport { height: 868px; position: relative; background: #3c3c3c; border-radius: 6px; overflow: hidden; flex: none; }
.scene { position: absolute; inset: 0; width: 1364px; height: 868px; }
.btn {
  height: 23px; background: #2b2b2b; border-radius: 4px; color: #d6d6d6;
  display: flex; align-items: center; overflow: hidden; flex: none; padding: 0 7px;
}
.vh1 {
  position: relative; height: 31px; background: #434343;
  display: flex; align-items: center; padding: 2px 10px 0 11px;
}
.vh2 {
  position: relative; height: 33px;
  display: flex; align-items: center; padding: 0 10px 0 12px;
}
.bare { display: flex; align-items: center; justify-content: center; color: #e6e6e6; }
.label { color: #d0d0d0; }
.w-edit { width: 38px; padding: 0 5px; }
.w-move { width: 30px; margin-left: 14px; }
.w-orient { width: 113px; margin-left: 22px; }
.w-default { width: 122px; }
.w-default .i18, .w-global .i18, .w-mode .i18 { margin-right: 7px; }
.w-drag { width: 57px; margin-left: 18px; }
.w-box { width: 113px; padding-left: 9px; }
.w-global { width: 98px; margin-left: 21px; }
.w-pivot { width: 37px; margin-left: 8px; padding: 0 4px; }
.w-snap { width: 63px; margin-left: 9px; padding: 0 4px 0 0; }
.w-prop { margin-left: 8px; background: #353535; }
.seg { width: 23px; height: 23px; display: flex; align-items: center; justify-content: center; margin-right: 3px; }
.seg.grey { background: #5c5c5c; }
.seg.blue { background: #5680c2; margin-right: 0; color: #fff; }
.w-options { width: 78px; margin-left: auto; padding-left: 9px; }
.w-mode { width: 135px; padding: 0 6px; }
.w-view { width: 48px; margin-left: 8px; justify-content: center; }
.w-select { width: 55px; margin-left: 2px; justify-content: center; }
.w-add { width: 41px; margin-left: 3px; justify-content: center; }
.w-object { width: 58px; margin-left: 3px; justify-content: center; }
.w-vis { width: 38px; margin-left: auto; padding: 0 4px; background: #262626; }
.w-on { width: 48px; margin-left: 8px; padding: 0; background: #262626; }
.w-on + .w-on { margin-left: 8px; }
.rest { flex: 1; display: flex; align-items: center; justify-content: center; }
.rest .chev { margin: 0; }
.w-xray { width: 22px; margin-left: 8px; padding: 2px; background: #464646; color: #666; }
.w-shade { width: 120px; margin-left: 9px; padding: 0; background: #262626; }
.cell { width: 24px; height: 23px; background: #585858; color: #ddd; display: flex; align-items: center; justify-content: center; }
.cell .i18 { width: 17px; height: 17px; }
.cell.blue { background: #5680c2; color: #fff; }
.cell:nth-child(2) { color: #c8c8c8; }

.tools { position: absolute; left: 11px; top: 74px; width: 51px; display: flex; flex-direction: column; gap: 8px; }
.tool-group { background: #2a2a2a; border-radius: 5px; overflow: hidden; display: flex; flex-direction: column; }
.tool { height: 42.25px; display: flex; align-items: center; justify-content: center; position: relative; color: #fff; padding-right: 3px; }
.tool + .tool { border-top: 1px solid #333; }
.tool.on { background: #5680c2; }
.tool.corner::after {
  content: ""; position: absolute; right: 3px; bottom: 3px;
  border-style: solid; border-width: 0 0 5px 5px; border-color: transparent transparent #777 transparent;
}
.overlay-text {
  position: absolute; left: 84px; top: 78px; display: flex; flex-direction: column; gap: 11px;
  color: #f0f0f0; text-shadow: 0 0 2px #000; line-height: 13px;
}
.side-tab {
  position: absolute; right: 0; top: 81px; width: 10px; height: 18px; background: #333;
  border-radius: 4px 0 0 4px; display: flex; align-items: center; justify-content: center;
}
.side-tab svg { width: 6px; height: 10px; }
.gizmo { position: absolute; left: 1272px; top: 70px; width: 100px; height: 130px; overflow: visible; }
.gizmo-x { position: absolute; left: 1251px; top: 115px; width: 20px; height: 20px; }
.gz { font: 13px "DejaVu Sans", sans-serif; fill: #1c1c1c; fill-opacity: .6; text-anchor: middle; }
.nav-btns { position: absolute; left: 1319px; top: 178px; display: flex; flex-direction: column; gap: 4px; }
.nav { width: 34px; height: 34px; border-radius: 50%; background: #2f2f2f; display: flex; align-items: center; justify-content: center; color: #e6e6e6; }

/* timeline */
.timeline { flex: 1; background: #343434; border-radius: 6px 6px 0 0; overflow: hidden; display: flex; flex-direction: column; }
.tl-head { height: 31px; background: #3f3f3f; display: flex; align-items: center; padding: 1px 11px 0; flex: none; }
.btn-join { display: flex; margin-left: 8px; height: 24px; border: 1px solid #474747; border-radius: 4px; background: #2b2b2b; overflow: hidden; color: #d6d6d6; flex: none; }
.j { display: flex; align-items: center; padding: 0 6px 0 9px; flex: none; }
.w-play { width: 87px; border-right: 1px solid #474747; }
.w-key { width: 75px; }
.tl-link { margin-left: 18px; color: #d6d6d6; flex: none; }
.tl-link.first { margin-left: 7px; }
.g-btn { height: 24px; background: #565656; border-radius: 4px; display: flex; align-items: center; justify-content: center; color: #dcdcdc; flex: none; }
.w-rec { width: 23px; margin-left: 257px; }
.transport { width: 148px; margin-left: 8px; overflow: hidden; }
.t { flex: 1; height: 24px; display: flex; align-items: center; justify-content: center; }
.t + .t { border-left: 1px solid #3f3f3f; }
.w-frame { width: 92px; margin-left: 242px; }
.range { width: 241px; margin-left: 8px; overflow: hidden; }
.r-clock { width: 23px; display: flex; justify-content: center; }
.r-val { height: 24px; display: flex; align-items: center; justify-content: space-between; border-left: 1px solid #3f3f3f; }
.w-start { width: 112px; padding: 0 18px; }
.w-end { width: 106px; padding: 0 13px 0 19px; }
.ruler { height: 25px; display: flex; align-items: center; position: relative; margin-left: -6px; color: #b4b4b4; font-size: 13px; padding-top: 5px; flex: none; }
.rl { flex: 0 0 101.45px; text-align: center; }
.badge {
  position: absolute; left: 402px; top: 4px; width: 29px; height: 21px; background: #4d76b8;
  border-radius: 4px 4px 0 0; color: #f2f2f2; display: flex; align-items: center; justify-content: center; padding-top: 2px;
}
.scrollrow { height: 15px; display: flex; align-items: flex-start; padding-left: 11px; border-bottom: 3px solid #2b2b2b; position: relative; }
.scroll { width: 1343px; height: 12px; background: #666; border-radius: 6px; display: flex; justify-content: space-between; padding: 2px 1px; }
.scroll i { width: 9px; height: 8px; background: #454545; border-radius: 4px; }
.tl-arrow { width: 6px; height: 10px; margin: 0 0 0 2px; }

/* outliner */
.outliner { height: 317px; flex: none; background: #282828; border-radius: 6px 6px 0 0; overflow: hidden; display: flex; flex-direction: column; }
.ol-head { height: 31px; background: #434343; display: flex; align-items: center; padding: 0 13px 0 10px; flex: none; }
.w-ol1 { width: 39px; padding: 0 3px 0 5px; border: 1px solid #3c3c3c; }
.w-ol2 { width: 39px; margin-left: 7px; padding: 0 3px 0 5px; border: 1px solid #3c3c3c; }
.ol-search { width: 142px; height: 25px; margin-left: 95px; background: #1f1f1f; border-radius: 4px; display: flex; align-items: center; padding-left: 5px; color: #ddd; }
.ol-filter { margin-left: auto; margin-right: 1px; }
.ol-new { width: 23px; height: 23px; margin-left: 6px; background: #5a5a5a; border-radius: 4px; display: flex; align-items: center; justify-content: center; color: #ccc; }
.ol-list {
  flex: 1; position: relative; padding-top: 3px;
  background: repeating-linear-gradient(#2b2b2b 0 25px, #282828 25px 50px);
  background-position: 0 3px;
}
.tree { position: absolute; left: 36px; top: 17px; width: 1px; height: 147px; background: #7a7a7a; }
.row { height: 25px; display: flex; align-items: center; position: relative; color: #c8c8c8; padding-right: 14px; }
.row.root { padding-left: 30px; }
.row.root .ico { margin-right: 9px; }
.ico { width: 16px; height: 16px; color: #d8d8d8; }
.orange { color: #d18a45; }
.green { color: #1fb58b; }
.arrow { width: 10px; height: 25px; margin-left: 33px; position: relative; flex: none; }
.arrow::before {
  content: ""; position: absolute; left: 1px; top: 8px;
  border-style: solid; border-width: 4px 0 4px 7px; border-color: transparent transparent transparent #c8c8c8;
}
.obj .arrow::after { content: ""; position: absolute; left: 4px; top: 12px; width: 18px; height: 1px; background: #7a7a7a; }
.check {
  width: 14px; height: 14px; margin-left: 12px; background: #d8d8d8; border-radius: 2px; position: relative; flex: none;
}
.check::after {
  content: ""; position: absolute; left: 4px; top: 1px; width: 4px; height: 8px;
  border: solid #222; border-width: 0 2px 2px 0; transform: rotate(40deg);
}
.coll-ico { margin-left: 11px; }
.coll-box { width: 24px; height: 23px; margin: 0 -4px 0 7px; display: flex; align-items: center; justify-content: center; background: #333; border: 1px solid #5a5a5a; border-radius: 5px; }
.name { color: #c8c8c8; }
.cname { margin-left: 9px; width: 67px; }
.oname { margin-left: 9px; width: 91px; }
.mo { margin-left: 12px; position: relative; }
.mo-box { width: 24px; height: 24px; margin: 0 -4px 0 8px; background: #5c5c5c; border-radius: 5px; display: flex; align-items: center; justify-content: center; position: relative; }
.extra { position: relative; width: 16px; height: 16px; margin-right: 9px; }
.extra b {
  position: absolute; right: -8px; bottom: -5px; width: 12px; height: 12px; border-radius: 50%;
  background: #141414; color: #e8e8e8; font: 10px/12px "DejaVu Sans", sans-serif; text-align: center;
}
.push { margin-left: 24px; }
.next { margin-left: 0; }
.cam { width: 18px; height: 16px; }
.eye { width: 15px; height: 12px; margin-left: auto; margin-bottom: 2px; color: #dcdcdc; }

/* properties */
.properties { flex: 1; background: #434343; border-radius: 6px 6px 0 0; overflow: hidden; display: flex; flex-direction: column; }
.pr-head { height: 31px; background: #3a3a3a; display: flex; align-items: center; padding: 0 14px 0 10px; flex: none; }
.w-pr { width: 39px; padding: 0 3px 0 5px; border: 1px solid #3c3c3c; }
.pr-obj { margin-left: 16px; color: #ddd; }
.pr-name { margin-left: 10px; color: #d8d8d8; }
.pin { width: 16px; height: 16px; margin-left: auto; color: #777; }
.pr-body { flex: 1; display: flex; }
.pr-tabs { width: 35px; background: #343434; padding: 9.5px 0 0 2px; display: flex; flex-direction: column; gap: 9px; flex: none; }
.pgroup { display: flex; flex-direction: column; gap: 0; }
.ptab { height: 35px; background: #2b2b2b; border-radius: 5px 0 0 5px; display: flex; align-items: center; justify-content: center; color: #ddd; border-bottom: 1px solid #383838; flex: none; }
.ptab.solo { border-bottom: 0; }
.ptab.act { background: #434343; border-radius: 5px 0 0 5px; }
.c-w { color: #d8d8d8; }
.c-r { color: #cc6670; }
.c-o { color: #e3954e; }
.c-b { color: #70a6ea; }
.c-bd { color: #6a90c0; }
.c-g { color: #1fb58b; }
.pr-main { flex: 1; padding: 11px 10px 0 10px; }
.add-mod { width: 100%; padding: 0 5px 0 9px; }

/* status */
.status { height: 25px; flex: none; background: #2e2e2e; color: #a8a8a8; display: flex; align-items: center; position: relative; }
.st { display: flex; align-items: center; }
.ms { width: 14px; height: 19px; margin-right: 13px; color: #bbb; }
.ripple { width: 4px; height: 10px; margin: -6px 7px 0 -11px; border-left: 1px solid #bbb; border-right: 1px solid #bbb; }
.s1 { margin-left: 15px; }
.s2 { margin-left: 15px; }
.s3 { margin-left: 134px; }
.s4 { margin-left: 205.5px; }
.version { margin-left: auto; margin-right: 21px; color: #909090; }

/* taskbar */
.taskbar { height: 50px; flex: none; background: #1d1d1f; display: flex; position: relative; }
.tb { width: 62px; height: 50px; display: flex; align-items: center; justify-content: center; position: relative; padding-bottom: 3px; flex: none; }
.tb.sys { width: 60px; }
.tb.sys.wide { width: 62px; }
.tb.on::after { content: ""; position: absolute; left: 6px; right: 6px; bottom: 0; height: 3px; background: #76b9ed; }
.tb.active { background: #474747; }
.tb.active::after { content: ""; position: absolute; left: 0; right: 0; bottom: 0; height: 3px; background: #76b9ed; }
.blender { color: #ea7600; --eye: #fff; --pupil: #2a6fb0; }
.adobe {
  width: 27px; height: 27px; border: 2px solid; display: flex; align-items: center; justify-content: center;
  font: 700 15px/1 "Open Sans", sans-serif;
}
.ae { color: #c7a3ff; border-color: #a77dff; background: #1d0a3a; }
.ps { color: #31c5f0; border-color: #31c5f0; background: #001d2e; }
.au { color: #00e4bb; border-color: #00e4bb; background: #002b24; }
.tray { margin-left: auto; display: flex; align-items: center; height: 50px; font-family: "Open Sans", sans-serif; color: #f0f0f0; }
.tr { height: 50px; display: flex; align-items: center; justify-content: center; flex: none; }
.w30 { width: 30px; }
.w31 { width: 31px; }
.eng { width: 42px; }
.clock { width: 94px; flex-direction: column; gap: 10px; }
.date { font-size: 14.5px; }
.notif { width: 50px; position: relative; padding-bottom: 4px; }
.nbadge {
  position: absolute; left: 25px; top: 24px; width: 21px; height: 21px; border-radius: 50%;
  background: #1d1d1f; border: 1px solid #bbb; color: #fff; font: 700 12px/19px "Open Sans", sans-serif; text-align: center;
}
.desktop { width: 5px; height: 50px; margin-left: 11px; border-left: 1px solid #666; }
```
